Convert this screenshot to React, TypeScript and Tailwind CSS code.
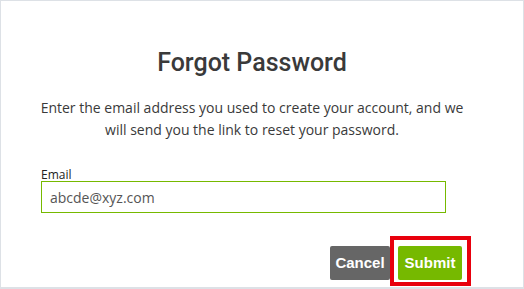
export default function App() {
  return (
    <div className="w-[524px] h-[289px] bg-white border border-b-2 border-[#dde1e6] font-['Open_Sans',sans-serif] text-[#333]">
      <div className="flex flex-col items-center pt-[46px] pr-[20px]">
        <h1 className="font-['Roboto',sans-serif] text-[25px] leading-[32px] font-medium text-[#3a3a3a]">Forgot Password</h1>
        <p className="mt-[18px] text-[14px] leading-[22px] text-center text-[#3a3a3a] w-[440px]">
          Enter the email address you used to create your account, and we will send you the link to reset your password.
        </p>
      </div>
      <div className="px-[40px] mt-[28px]">
        <label className="block text-[12px] leading-[12px] text-[#222]">Email</label>
        <div className="w-[405px] h-[32px] border border-[#76b900] flex items-center px-[8px] text-[14px] text-[#555]">
          abcde@xyz.com
        </div>
        <div className="flex justify-end items-end mt-[23px] pr-[12px] font-['Liberation_Sans',sans-serif] font-bold text-white text-[15px]">
          <button className="w-[60px] h-[34px] bg-[#666] rounded-[2px] mb-[6px]">Cancel</button>
          <div className="border-4 border-[#e8000d] pl-[4px] pr-[5px] pt-[6px] pb-[2px]">
            <button className="w-[64px] h-[34px] bg-[#76b900] rounded-[2px] block">Submit</button>
          </div>
        </div>
      </div>
    </div>
  );
}
